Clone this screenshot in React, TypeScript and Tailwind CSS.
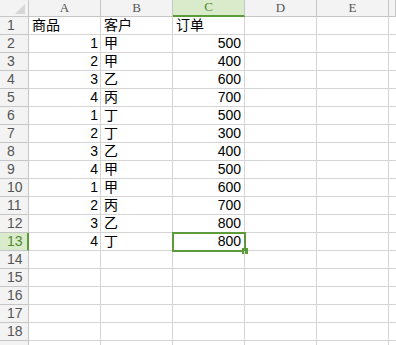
import React from "react";

const cols = ["A", "B", "C", "D", "E", ""];

const rows: [string, string, string][] = [
  ["商品", "客户", "订单"],
  ["1", "甲", "500"],
  ["2", "甲", "400"],
  ["3", "乙", "600"],
  ["4", "丙", "700"],
  ["1", "丁", "500"],
  ["2", "丁", "300"],
  ["3", "乙", "400"],
  ["4", "甲", "500"],
  ["1", "甲", "600"],
  ["2", "丙", "700"],
  ["3", "乙", "800"],
  ["4", "丁", "800"],
  ["", "", ""],
  ["", "", ""],
  ["", "", ""],
  ["", "", ""],
  ["", "", ""],
  ["", "", ""],
];

const cellFont = {
  fontFamily: '"Liberation Sans", "Noto Sans CJK SC", sans-serif',
};

export default function App() {
  return (
    <div
      className="h-[345px] w-[396px] overflow-hidden bg-white text-[14px] text-black"
      style={cellFont}
    >
      <div className="grid grid-cols-[29px_72px_72px_72px_72px_72px_1fr]">
        {/* column header row */}
        <div className="relative h-[17px] border-b border-r border-[#c6c6c6] bg-[#f3f3f3]">
          <div className="absolute bottom-[2px] right-[3px] h-0 w-0 border-b-[10px] border-l-[10px] border-b-[#d6d6d6] border-l-transparent" />
        </div>
        {cols.map((c, i) =>
          c === "C" ? (
            <div
              key={i}
              className="flex h-[17px] items-center justify-center border-b-2 border-r border-b-[#5b9b3a] border-r-[#c6c6c6] bg-[#d9ebcb] pb-[1px] font-['Liberation_Serif'] text-[13px] text-[#4f8a30]"
            >
              {c}
            </div>
          ) : (
            <div
              key={i}
              className="flex h-[17px] items-center justify-center border-b border-r border-[#c6c6c6] bg-[#f3f3f3] font-['Liberation_Serif'] text-[13px] text-[#555]"
            >
              {c}
            </div>
          )
        )}

        {rows.map((r, ri) => {
          const n = ri + 1;
          const active = n === 13;
          return (
            <React.Fragment key={ri}>
              <div
                className={`flex h-[18px] items-center pl-[7px] text-[14px] ${
                  active
                    ? "border-b border-r-2 border-b-[#c6c6c6] border-r-[#5b9b3a] bg-[#d9ebcb] text-[#4f8a30]"
                    : "border-b border-r border-[#c6c6c6] bg-[#f3f3f3] text-[#555]"
                }`}
              >
                {n < 19 ? n : ""}
              </div>
              <div
                className={`flex h-[18px] items-center border-b border-r border-[#d4d4d4] pr-[2px] ${
                  n === 1 ? "justify-start pl-[3px]" : "justify-end"
                }`}
              >
                {r[0]}
              </div>
              <div className="flex h-[18px] items-center border-b border-r border-[#d4d4d4] pl-[3px]">
                {r[1]}
              </div>
              <div
                className={`relative flex h-[18px] items-center border-b border-r border-[#d4d4d4] pr-[3px] ${
                  n === 1 ? "justify-start pl-[3px]" : "justify-end"
                }`}
              >
                {r[2]}
                {active && (
                  <>
                    <div className="absolute -left-[1px] -top-[1px] h-[20px] w-[74px] border-2 border-[#5b9b3a]" />
                    <div className="absolute -bottom-[4px] -right-[4px] h-[6px] w-[6px] bg-[#5b9b3a]" />
                  </>
                )}
              </div>
              <div className="h-[18px] border-b border-r border-[#d4d4d4]" />
              <div className="h-[18px] border-b border-r border-[#d4d4d4]" />
              <div className="h-[18px] border-b border-[#d4d4d4]" />
            </React.Fragment>
          );
        })}
      </div>
    </div>
  );
}
